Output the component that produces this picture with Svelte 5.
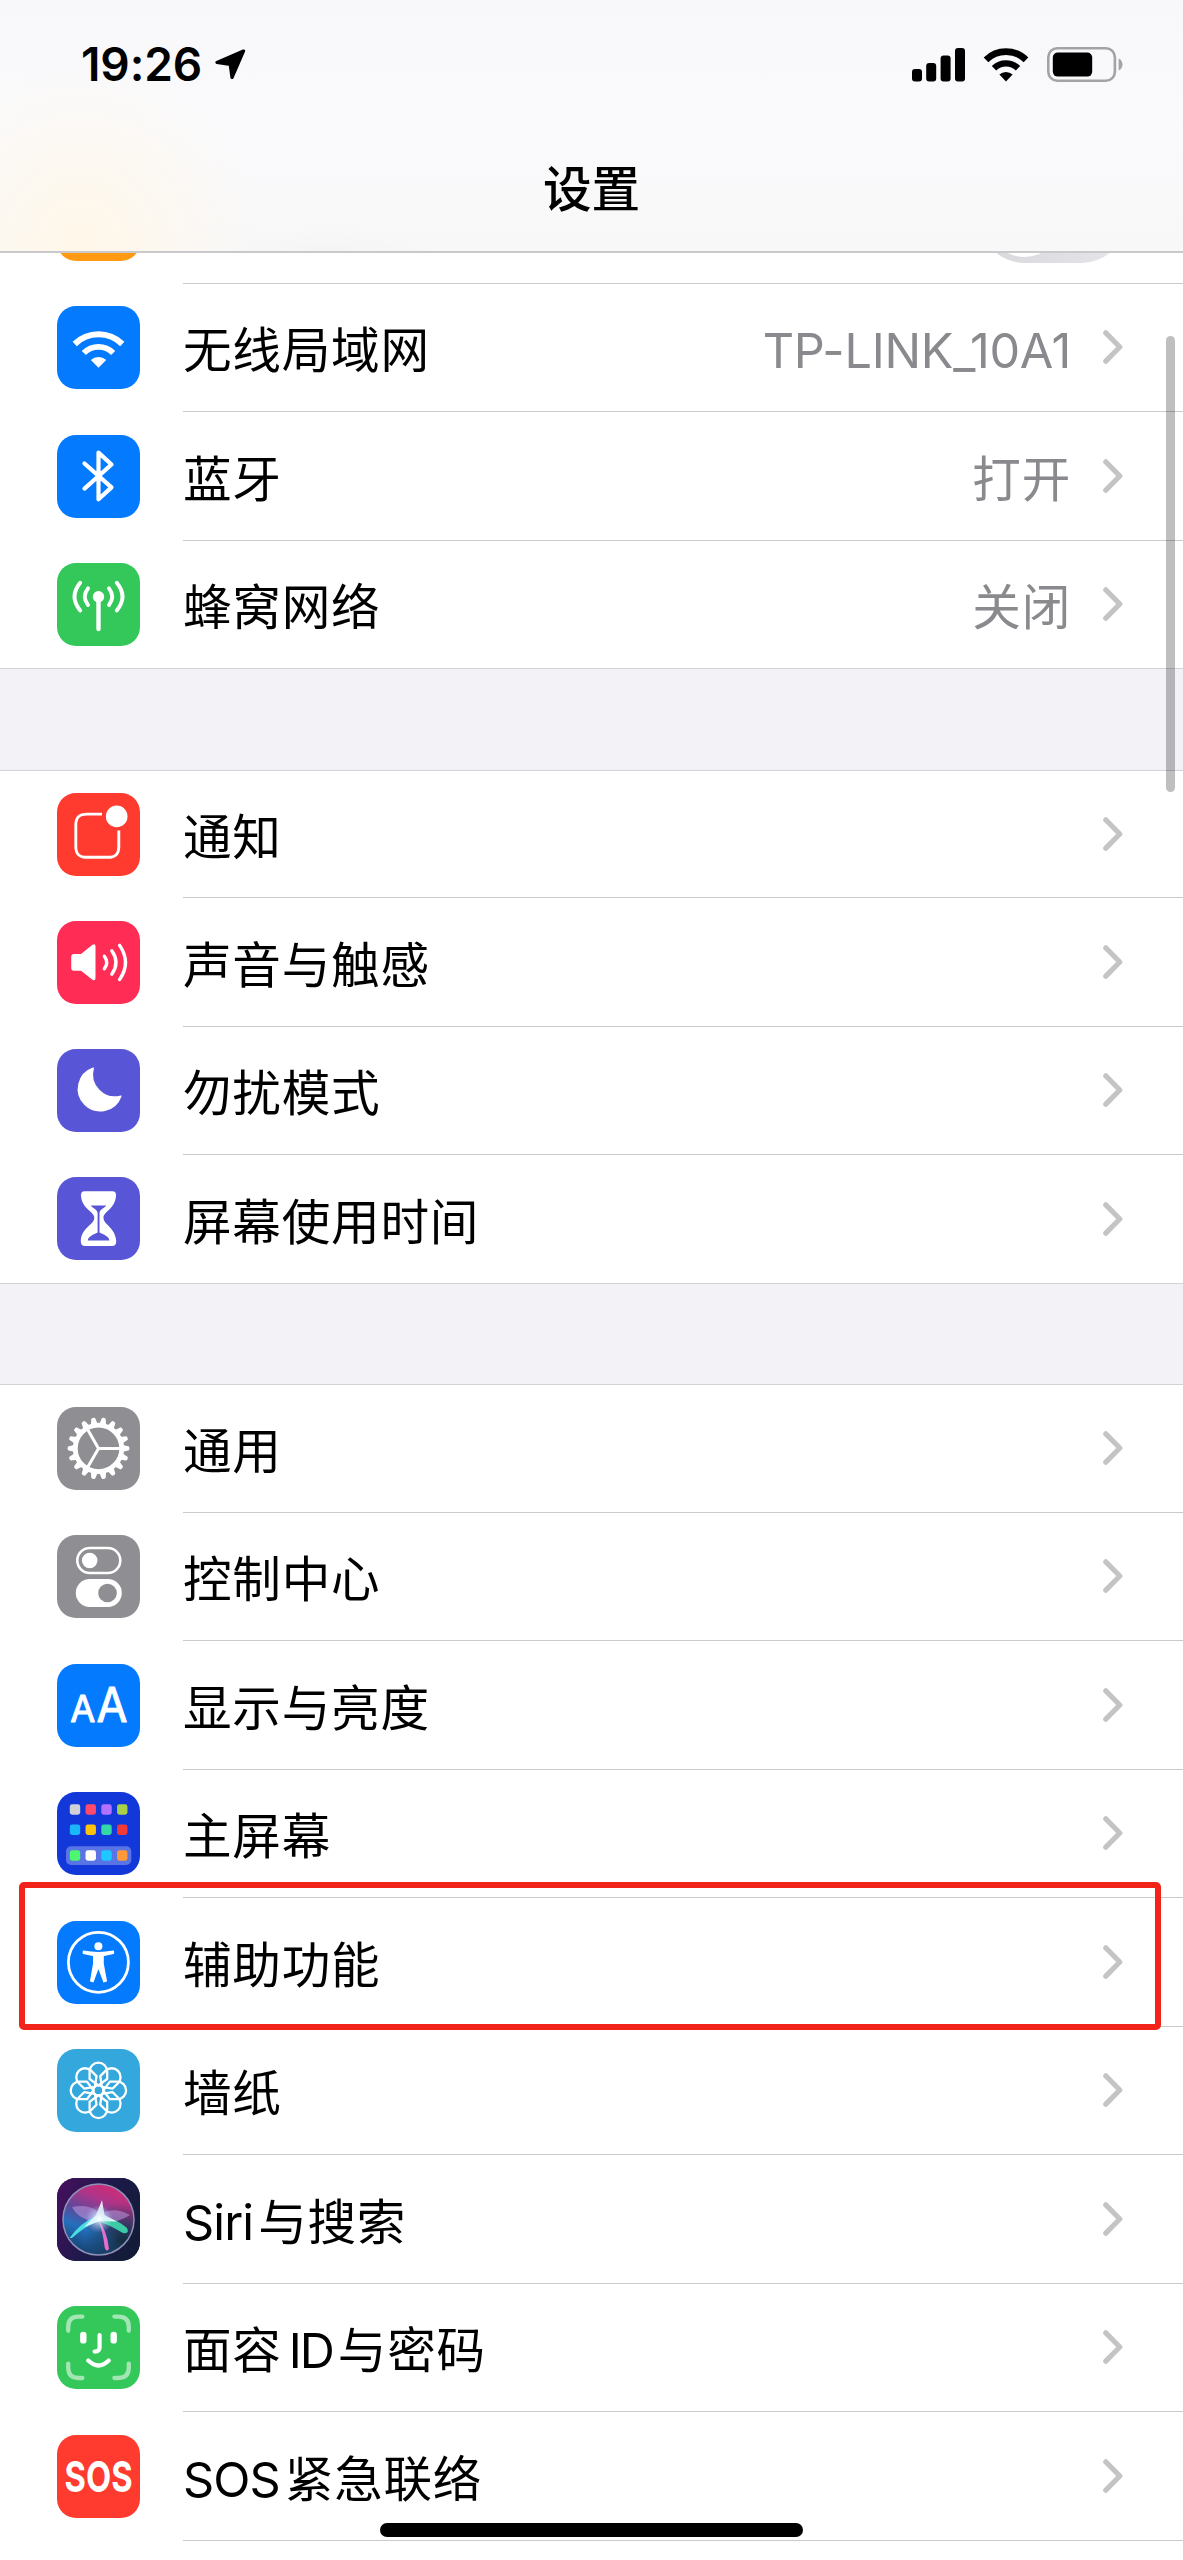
<script>
  const groups = [
    [
      { icon: 'plane', color: '#ff9a12', toggle: true },
      { icon: 'wifi', color: '#047aff', label: ['无线局域网'], value: 'TP-LINK_10A1' },
      { icon: 'bluetooth', color: '#047aff', label: ['蓝牙'], value: '打开' },
      { icon: 'cellular', color: '#34c759', label: ['蜂窝网络'], value: '关闭' }
    ],
    [
      { icon: 'notify', color: '#ff3b30', label: ['通知'] },
      { icon: 'sound', color: '#ff2d55', label: ['声音与触感'] },
      { icon: 'moon', color: '#5856d6', label: ['勿扰模式'] },
      { icon: 'hourglass', color: '#5856d6', label: ['屏幕使用时间'] }
    ],
    [
      { icon: 'gear', color: '#8e8e93', label: ['通用'] },
      { icon: 'control', color: '#8e8e93', label: ['控制中心'] },
      { icon: 'display', color: '#047aff', label: ['显示与亮度'] },
      { icon: 'home', color: '#1238da', label: ['主屏幕'] },
      { icon: 'access', color: '#047aff', label: ['辅助功能'], marked: true },
      { icon: 'wallpaper', color: '#34a8dc', label: ['墙纸'] },
      { icon: 'siri', color: '#161a3c', label: ['Siri', '与搜索'] },
      { icon: 'face', color: '#34c759', label: ['面容', 'ID', '与密码'] },
      { icon: 'sos', color: '#ff3b30', label: ['SOS', '紧急联络'] }
    ]
  ];

  const teeth = Array.from({ length: 18 }, (_, i) => i * 20);
  const petals = Array.from({ length: 8 }, (_, i) => i * 45);
  const apps = [
    ['#d0d2d8', '#ff4a6c', '#b272ff', '#a8d148'],
    ['#1ab8fb', '#ffc30c', '#34d8a8', '#f23a38'],
    ['#4df76f', '#ffffff', '#1cc8ff', '#ff9838']
  ];
  const appRows = [12.3, 32.6, 58.3];

  const isLatin = (part) => /^[A-Za-z]/.test(part);
</script>

<div class="phone">
  <header>
    <div class="status">
      <div class="clock">
        <span class="time">19:26</span>
        <svg width="31" height="31" viewBox="0 0 31 31">
          <path d="M28.5 2 L2 13.4 L15.2 15.4 L17 28.5 Z" fill="#000" stroke="#000" stroke-width="3.2" stroke-linejoin="round" />
        </svg>
      </div>
      <div class="indicators">
        <svg width="53" height="35" viewBox="0 0 53 35">
          <rect x="0" y="22" width="10" height="12.6" rx="3" />
          <rect x="14.2" y="16" width="10" height="18.6" rx="3" />
          <rect x="28.6" y="8.6" width="10" height="26" rx="3" />
          <rect x="43" y="1" width="10" height="33.6" rx="3" />
        </svg>
        <svg class="signal" width="46" height="35" viewBox="0 0 46 35">
          <path d="M3 12.8 A28.5 28.5 0 0 1 43 12.8" fill="none" stroke="#000" stroke-width="6.6" />
          <path d="M11 21.3 A17 17 0 0 1 35 21.3" fill="none" stroke="#000" stroke-width="6.2" />
          <path d="M23 34.5 L16.4 27.6 A9.4 9.4 0 0 1 29.6 27.6 Z" />
        </svg>
        <svg class="battery" width="76" height="35" viewBox="0 0 76 35">
          <rect x="1.3" y="1.3" width="66.6" height="32.4" rx="9" fill="none" stroke="#a3a3a5" stroke-width="2.6" />
          <rect x="5.8" y="5.6" width="39.4" height="24" rx="5" />
          <path d="M71.6 11.5 C76.8 13.5 76.8 21.5 71.6 23.5 Z" fill="#a3a3a5" />
        </svg>
      </div>
    </div>
    <h1>设置</h1>
  </header>

  <main>
    {#each groups as rows}
      <section>
        {#each rows as row}
          <div class="row">
            <svg class="icon" width="83" height="83" viewBox="0 0 83 83" style:background={row.color}>
              {#if row.icon === 'wifi'}
                <path class="line" stroke-width="6" stroke-linecap="butt" d="M17.7 38 A34 34 0 0 1 65.3 38" />
                <path class="line" stroke-width="5.8" stroke-linecap="butt" d="M26.8 47 A20.8 20.8 0 0 1 56.2 47" />
                <path fill="#fff" d="M41.5 61.8 L33.8 54 A11.5 11.5 0 0 1 49.2 54 Z" />
              {:else if row.icon === 'bluetooth'}
                <path class="line" stroke-width="4.2" d="M27.5 28.5 L54.5 52.4 L41.5 64.3 V17.6 L54.5 29.5 L27.5 53.6" />
              {:else if row.icon === 'cellular'}
                <circle cx="41.5" cy="33.8" r="5.7" fill="#fff" />
                <path class="line" stroke-width="4.4" d="M41.5 34 V66" />
                <path class="line" stroke-width="3.9" d="M31 25.4 Q24.6 33.7 31 42 M52 25.4 Q58.4 33.7 52 42 M23.2 19.8 Q11.8 33.7 23.2 47.4 M59.8 19.8 Q71.2 33.7 59.8 47.4" />
              {:else if row.icon === 'notify'}
                <path class="line" stroke-width="2.9" stroke-linecap="butt" d="M45 21.1 H30 C22 21.1 18.8 24.3 18.8 32 V53.4 C18.8 61 22 64.3 30 64.3 H51 C58.6 64.3 61.8 61 61.8 53.4 V37.6" />
                <circle cx="59.7" cy="23.4" r="10.8" fill="#fff" />
              {:else if row.icon === 'sound'}
                <path fill="#fff" d="M17 33 H24 L35.5 23.8 Q38.5 22 38.5 25.5 V57 Q38.5 60.5 35.5 58.8 L24 49.8 H17 Q14.2 49.8 14.2 47 V36 Q14.2 33 17 33 Z" />
                <path class="line" stroke-width="3.4" d="M47.4 35.2 Q52 41.4 47.4 47.8 M54.8 29.8 Q63.2 41.4 54.8 53.2 M62.6 24.4 Q74.4 41.4 62.6 58.6" />
              {:else if row.icon === 'moon'}
                <path fill="#fff" stroke="#fff" stroke-width="1.5" stroke-linejoin="round" d="M36.2 19.3 A21.8 21.8 0 1 0 63.8 47.2 A22.6 22.6 0 0 1 36.2 19.3 Z" />
              {:else if row.icon === 'hourglass'}
                <path fill="#fff" d="M27.5 14.3 H55.5 Q59.5 14.3 59 19 C58 32 46.5 34.5 46.5 40.8 C46.5 48 58 50 59.2 63.5 Q59.5 69 55 69 H28 Q23.5 69 23.8 63.5 C25 50 37.3 48 37.3 40.8 C37.3 34.5 25 32 24 19 Q23.5 14.3 27.5 14.3 Z" />
                <path fill="#5856d6" d="M33.8 28.6 H49.2 C47.5 31.6 43 32 42.5 36 V55.6 C46.5 57.4 52.2 59.6 52.4 63.4 H30.8 C31 59.6 36.7 57.4 40.6 55.6 V36 C40 32 35.5 31.6 33.8 28.6 Z" />
              {:else if row.icon === 'gear'}
                <circle cx="41.5" cy="41.4" r="23.2" fill="none" stroke="#fff" stroke-width="4.8" />
                {#each teeth as angle}
                  <path fill="#fff" transform="rotate({angle} 41.5 41.4)" d="M65 37.8 L72 39.5 Q73 41.4 72 43.3 L65 45 Z" />
                {/each}
                <path class="line" stroke-width="3" d="M41.5 41.4 H64 M41.5 41.4 L30.5 22.3 M41.5 41.4 L30.5 60.5" />
              {:else if row.icon === 'control'}
                <rect x="20.3" y="13" width="43" height="25" rx="12.5" fill="none" stroke="#fff" stroke-width="2.6" />
                <circle cx="32.7" cy="25.5" r="7.8" fill="#fff" />
                <rect x="18.8" y="44" width="46" height="28" rx="14" fill="#fff" />
                <circle cx="50.5" cy="58" r="9.3" fill="#8e8e93" />
              {:else if row.icon === 'display'}
                <text class="glyph" x="13.2" y="58.4" font-size="37" textLength="25" lengthAdjust="spacingAndGlyphs">A</text>
                <text class="glyph" x="39.4" y="58.4" font-size="47.5" textLength="31" lengthAdjust="spacingAndGlyphs">A</text>
              {:else if row.icon === 'home'}
                <rect x="9" y="54.3" width="65.3" height="18.7" rx="5" fill="#fff" opacity="0.3" />
                {#each apps as line, r}
                  {#each line as fill, c}
                    <rect x={12.8 + c * 15.75} y={appRows[r]} width="10.4" height="10.4" rx="2.4" {fill} />
                  {/each}
                {/each}
              {:else if row.icon === 'access'}
                <circle cx="41.4" cy="41.3" r="30" fill="none" stroke="#fff" stroke-width="2.8" />
                <circle cx="41.4" cy="25.3" r="4" fill="#fff" />
                <path fill="#fff" stroke="#fff" stroke-width="1.6" stroke-linejoin="round" d="M26.6 30.4 Q41.4 33 56.2 30.4 L56.4 32.2 L46 34.4 V43 L49.2 60 L47 60.6 L42 47.4 H40.8 L36 60.6 L33.8 60 L36.8 43 V34.4 L26.4 32.2 Z" />
              {:else if row.icon === 'wallpaper'}
                <circle cx="41.4" cy="41.4" r="5" fill="none" stroke="#fff" stroke-width="2.3" />
                {#each petals as angle}
                  <path class="line" stroke-width="2.3" transform="rotate({angle} 41.4 41.4)" d="M41.4 36.4 L32.6 30 V22.5 A8.8 8.8 0 0 1 50.2 22.5 V30 Z" />
                {/each}
              {:else if row.icon === 'siri'}
                <defs>
                  <linearGradient id="siriBack" x1="0" y1="0.2" x2="1" y2="0.6">
                    <stop offset="0" stop-color="#43105c" />
                    <stop offset="0.5" stop-color="#1e1a4c" />
                    <stop offset="1" stop-color="#121c38" />
                  </linearGradient>
                  <linearGradient id="siriOrb" x1="0.75" y1="0" x2="0.35" y2="1">
                    <stop offset="0" stop-color="#d42a72" />
                    <stop offset="0.25" stop-color="#b03488" />
                    <stop offset="0.5" stop-color="#5a4a9c" />
                    <stop offset="0.7" stop-color="#2470bc" />
                    <stop offset="1" stop-color="#16406e" />
                  </linearGradient>
                  <radialGradient id="siriShade" cx="0.85" cy="0.8" r="0.55">
                    <stop offset="0" stop-color="#142a3c" />
                    <stop offset="1" stop-color="#142a3c" stop-opacity="0" />
                  </radialGradient>
                  <radialGradient id="siriCore">
                    <stop offset="0" stop-color="#fff" />
                    <stop offset="0.35" stop-color="#d8f4ff" stop-opacity="0.6" />
                    <stop offset="1" stop-color="#9fd8ff" stop-opacity="0" />
                  </radialGradient>
                </defs>
                <rect width="83" height="83" fill="url(#siriBack)" />
                <circle cx="41.5" cy="41.5" r="35.5" fill="url(#siriOrb)" />
                <circle cx="41.5" cy="41.5" r="35.5" fill="url(#siriShade)" stroke="#8f90b8" stroke-width="1.5" />
                <path fill="#c9a0e8" opacity="0.5" d="M15 29 Q38 24 47 42 Q24 46 15 29 Z M42 36 Q58 28 73 37 Q60 46 42 44 Z" />
                <path fill="#4ce4e4" opacity="0.95" d="M12.5 60 Q24 44 40 38 L44 42 Q28 48 15 60 Z" />
                <path fill="#3cdcae" opacity="0.9" d="M42 38 Q60 41 70 50 Q73 56 66 55 Q54 48 42 43 Z" />
                <path fill="#f070d0" opacity="0.95" d="M41 42 Q50 52 52 71 Q49 75 47.6 69 Q46 54 41 42 Z" />
                <path fill="#fff" opacity="0.85" d="M45 22 L47.5 37 L60 43.5 L43 43 L27 49 L39 37 Z" />
                <circle cx="42" cy="41" r="14" fill="url(#siriCore)" />
              {:else if row.icon === 'face'}
                <path class="line" opacity="0.55" stroke-width="4.3" d="M11.2 24.8 V21 Q11.2 10.6 21.4 10.6 H25.4 M57.4 10.6 H61.4 Q71.8 10.6 71.8 21 V24.8 M71.8 57.6 V61.6 Q71.8 72 61.4 72 H57.4 M25.4 72 H21.4 Q11.2 72 11.2 61.6 V57.6" />
                <path class="line" stroke-width="6.4" d="M26.3 29 V34.4 M56.7 29 V34.4" />
                <path class="line" stroke-width="4.2" d="M42.6 29 V41.6 Q42.6 45.6 37.6 45.6 M31.2 54.6 Q41.5 64.4 51.8 54.6" />
              {:else if row.icon === 'sos'}
                <text class="sos" x="7.6" y="57.2" font-size="43" textLength="68" lengthAdjust="spacingAndGlyphs">SOS</text>
              {/if}
            </svg>

            <div class="body">
              {#if row.toggle}
                <span class="toggle"></span>
              {:else}
                <span class="label">
                  {#each row.label as part}<span class:latin={isLatin(part)}>{part}</span>{/each}
                </span>
                {#if row.value}
                  <span class="value"><span class:latin={isLatin(row.value)}>{row.value}</span></span>
                {/if}
                <svg class="chevron" width="20" height="34" viewBox="0 0 20 34">
                  <path d="M2.8 2.8 L16.8 17 L2.8 31.2" />
                </svg>
              {/if}
            </div>
            {#if row.marked}
              <div class="mark"></div>
            {/if}
          </div>
        {/each}
      </section>
    {/each}
  </main>

  <div class="scrollbar"></div>
  <div class="home-bar"></div>
</div>

<style>
  :global(body) {
    background: #fff;
  }

  .phone {
    position: relative;
    display: flex;
    flex-direction: column;
    width: 1183px;
    height: 2560px;
    overflow: hidden;
    background: #f2f2f7;
    color: #000;
    font-family: 'Noto Sans CJK SC', sans-serif;
    font-size: 48.6px;
  }

  header {
    position: relative;
    z-index: 2;
    flex: none;
    box-sizing: border-box;
    height: 253px;
    border-bottom: 2px solid #c9c9cb;
    background:
      radial-gradient(circle at 80px 240px, #fff7e9 0, rgba(255, 248, 238, 0) 180px),
      radial-gradient(ellipse at 330px 270px, #f3f2f3 0, rgba(244, 243, 244, 0) 130px),
      linear-gradient(#f8f8fb 0, #fafafc 50%, #f8f8f9 100%);
  }

  .status {
    display: flex;
    justify-content: space-between;
    padding: 46px 60px 0 81px;
    height: 36px;
  }

  .clock,
  .indicators {
    display: flex;
    align-items: center;
  }

  .clock {
    gap: 13px;
  }

  .time {
    font-family: Inter, sans-serif;
    font-size: 46px;
    font-weight: 600;
    letter-spacing: -0.1px;
    line-height: 38px;
  }

  .signal {
    margin-left: 18px;
  }

  .battery {
    margin-left: 18px;
  }

  h1 {
    margin: 68px 0 0;
    font-size: 48.6px;
    font-weight: 500;
    line-height: 72px;
    text-align: center;
  }

  /* the list is scrolled: its first row slides under the header */
  main {
    flex: 1;
    margin-top: -98px;
    display: flex;
    flex-direction: column;
  }

  section {
    flex: none;
    background: #fff;
    border-bottom: 1px solid #d2d2d7;
  }

  section + section {
    margin-top: 100.6px;
    border-top: 1px solid #d2d2d7;
  }

  section:last-child {
    flex: 1;
    border-bottom: 0;
  }

  .row {
    position: relative;
    display: flex;
    height: 128.5px;
    align-items: center;
    padding-left: 57px;
  }

  section + section .row:first-child,
  section:not(:last-child) .row:last-child {
    height: 127.5px;
  }

  .icon {
    flex: none;
    border-radius: 19px;
  }

  .body {
    display: flex;
    flex: 1;
    align-items: center;
    align-self: stretch;
    box-sizing: border-box;
    margin-left: 43px;
    padding-right: 60px;
    border-bottom: 1px solid #cbcbce;
  }

  section:not(:last-child) .row:last-child .body {
    border-bottom: 0;
  }

  .label {
    flex: 1;
    letter-spacing: 0.75px;
    line-height: 70px;
    white-space: nowrap;
  }

  .latin {
    font-family: Inter, sans-serif;
    line-height: 1;
  }

  .label .latin {
    letter-spacing: -0.9px;
    margin-right: 5px;
  }

  .label :not(.latin) + .latin {
    margin-left: 7px;
    letter-spacing: -2px;
  }

  .value {
    margin-right: 32px;
    color: #8a8a8e;
    letter-spacing: 0.75px;
    line-height: 70px;
  }

  .value .latin {
    letter-spacing: -0.25px;
  }

  .chevron {
    flex: none;
  }

  .chevron path {
    fill: none;
    stroke: #c4c4c7;
    stroke-width: 5.2;
    stroke-linecap: round;
    stroke-linejoin: round;
  }

  .toggle {
    box-sizing: border-box;
    width: 146px;
    height: 89px;
    margin: 0 -3px 0 auto;
    padding: 6px;
    border-radius: 45px;
    background: linear-gradient(90deg, #d8d8dc, #e6e6ea);
  }

  .toggle::before {
    content: '';
    display: block;
    width: 77px;
    height: 77px;
    border-radius: 50%;
    background: #fff;
  }

  .line {
    fill: none;
    stroke: #fff;
    stroke-linejoin: round;
  }

  .line:not([stroke-linecap]) {
    stroke-linecap: round;
  }

  .glyph,
  .sos {
    font-family: Inter, sans-serif;
    fill: #fff;
  }

  .glyph {
    stroke: #fff;
    stroke-width: 1;
    stroke-linejoin: round;
  }

  .sos {
    font-weight: 700;
  }

  .mark {
    position: absolute;
    z-index: 1;
    top: -16px;
    left: 19px;
    box-sizing: border-box;
    width: 1142px;
    height: 148px;
    border: 6px solid #f2231b;
    border-radius: 5px;
  }

  .scrollbar {
    position: absolute;
    top: 336px;
    left: 1166px;
    width: 9px;
    height: 456px;
    border-radius: 5px;
    background: rgba(0, 0, 0, 0.25);
  }

  .home-bar {
    position: absolute;
    bottom: 23px;
    left: 380px;
    width: 423px;
    height: 14px;
    border-radius: 7px;
    background: #000;
  }
</style>
